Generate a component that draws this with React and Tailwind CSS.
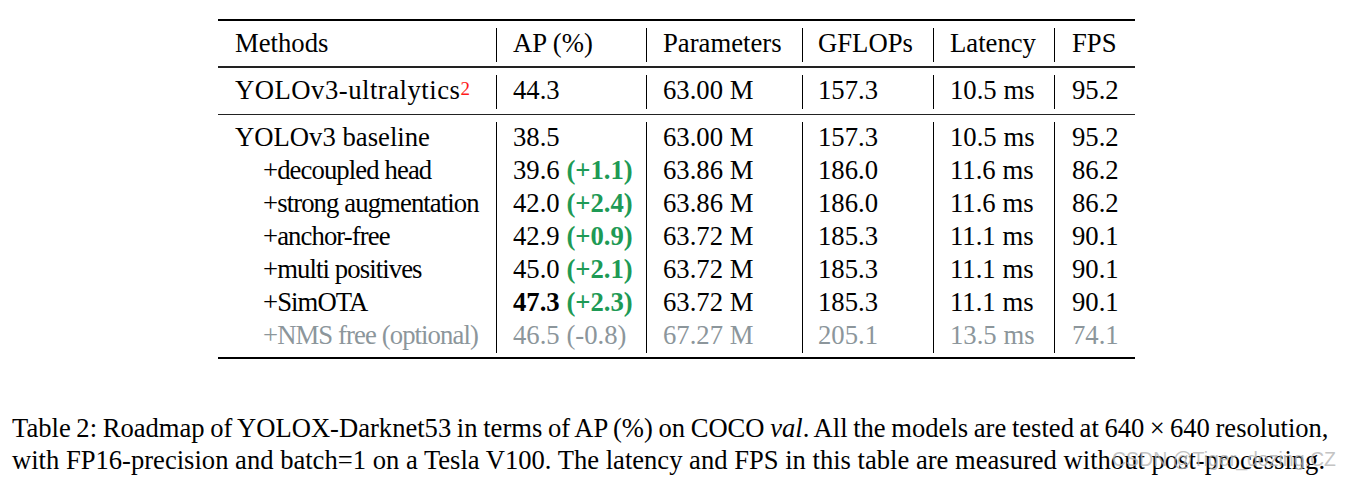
import React from "react";

const cols = "grid grid-cols-[278px_150px_156px_131px_121px_81px]";

const green = "text-[#1e9a55] font-bold";
const gray = "text-[#8c969b]";

const body = [
  { name: "YOLOv3 baseline", ap: "38.5", params: "63.00 M", flops: "157.3", lat: "10.5 ms", fps: "95.2" },
  { name: "+decoupled head", ap: "39.6", gain: "(+1.1)", params: "63.86 M", flops: "186.0", lat: "11.6 ms", fps: "86.2", sub: true },
  { name: "+strong augmentation", ap: "42.0", gain: "(+2.4)", params: "63.86 M", flops: "186.0", lat: "11.6 ms", fps: "86.2", sub: true },
  { name: "+anchor-free", ap: "42.9", gain: "(+0.9)", params: "63.72 M", flops: "185.3", lat: "11.1 ms", fps: "90.1", sub: true },
  { name: "+multi positives", ap: "45.0", gain: "(+2.1)", params: "63.72 M", flops: "185.3", lat: "11.1 ms", fps: "90.1", sub: true },
  { name: "+SimOTA", ap: "47.3", gain: "(+2.3)", params: "63.72 M", flops: "185.3", lat: "11.1 ms", fps: "90.1", sub: true, best: true },
  { name: "+NMS free (optional)", ap: "46.5", gain: "(-0.8)", params: "67.27 M", flops: "205.1", lat: "13.5 ms", fps: "74.1", sub: true, muted: true },
];

const Row = ({ cells, h = "h-[34px] leading-[31px]" }) => (
  <div className={cols}>
    <div className={"pl-[17px] whitespace-nowrap " + h}>{cells[0]}</div>
    <div className={"border-l border-black pl-[16px] whitespace-nowrap " + h}>{cells[1]}</div>
    <div className={"border-l border-black pl-[16px] whitespace-nowrap " + h}>{cells[2]}</div>
    <div className={"border-l border-black pl-[15px] whitespace-nowrap " + h}>{cells[3]}</div>
    <div className={"border-l border-black pl-[16px] whitespace-nowrap " + h}>{cells[4]}</div>
    <div className={"border-l border-black pl-[17px] whitespace-nowrap " + h}>{cells[5]}</div>
  </div>
);

export default function App() {
  return (
    <div className="relative w-[1355px] h-[482px] bg-white text-black overflow-hidden font-['Liberation_Serif','Times_New_Roman',serif]">
      {/* table */}
      <div className="ml-[218px] pt-[19px] w-[917px] text-[26.7px]">
        <div className="h-[2px] bg-black" />
        <div className="pt-[7px] pb-[4px]">
          <Row cells={["Methods", "AP (%)", "Parameters", "GFLOPs", "Latency", "FPS"]} />
        </div>
        <div className="h-[1.5px] bg-[#222]" />
        <div className="pt-[7px] pb-[5px]">
          <Row
            cells={[
              <span>
                <span className="tracking-[0.5px]">YOLOv3-ultralytics</span>
                <sup className="text-[19px] text-[#ff1a1a] relative top-[-4px]">2</sup>
              </span>,
              "44.3",
              "63.00 M",
              "157.3",
              "10.5 ms",
              "95.2",
            ]}
          />
        </div>
        <div className="h-[1.5px] bg-[#222]" />
        <div className="pt-[7px] pb-[4px]">
          {body.map((r) => (
            <div key={r.name} className={r.muted ? gray : ""}>
              <Row
                h="h-[33px] leading-[30px]"
                cells={[
                  <span className={r.sub ? "pl-[28px] tracking-[-0.9px]" : ""}>{r.name}</span>,
                  <span>
                    <span className={r.best ? "font-bold" : ""}>{r.ap}</span>
                    {r.gain && (
                      <span className={r.muted ? "" : green}> {r.gain}</span>
                    )}
                  </span>,
                  r.params,
                  r.flops,
                  r.lat,
                  r.fps,
                ]}
              />
            </div>
          ))}
        </div>
        <div className="h-[2px] bg-black" />
      </div>

      {/* caption */}
      <div className="mt-[53px] pl-[12px] text-[26.6px] leading-[32px]">
        <div className="whitespace-nowrap [word-spacing:-1px]">
          Table 2: Roadmap of YOLOX-Darknet53 in terms of AP (%) on COCO <i>val</i>. All the models are tested at 640{"\u2009"}×{"\u2009"}640 resolution,
        </div>
        <div className="whitespace-nowrap">
          with FP16-precision and batch=1 on a Tesla V100. The latency and FPS in this table are measured without post-processing.
        </div>
      </div>

      {/* watermark */}
      <div className="absolute left-[1112px] top-[450px] text-[19.5px] leading-none text-[#b4b4b4]/80 whitespace-nowrap font-['Liberation_Sans',Arial,sans-serif]">
        CSDN @Tiger_dozing.CZ
      </div>
    </div>
  );
}
